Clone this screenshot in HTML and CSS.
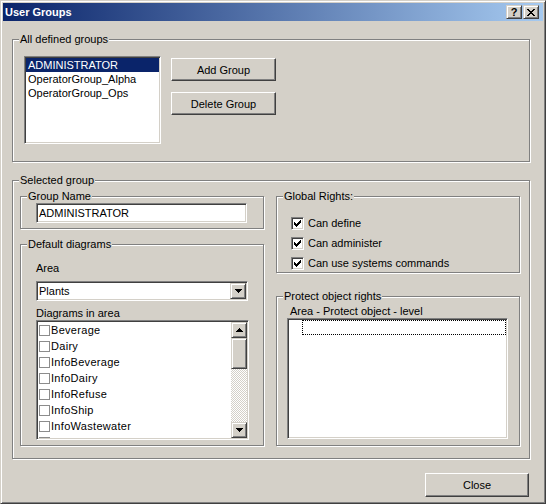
FILE: index.html
```html
<!DOCTYPE html>
<html lang="en">
<head>
  <meta charset="UTF-8">
  <title>User Groups</title>
  <link rel="stylesheet" href="styles.css">
</head>
<body>
  <div class="window">
    <div class="titlebar">
      <span class="title">User Groups</span>
      <div class="cap-btns">
        <div class="cap-btn help">?</div>
        <div class="cap-btn">
          <svg width="8" height="7" viewBox="0 0 8 7" shape-rendering="crispEdges"><path d="M0 0h2v1h-2z M6 0h2v1h-2z M1 1h2v1h-2z M5 1h2v1h-2z M2 2h4v1h-4z M3 3h2v1h-2z M2 4h4v1h-4z M1 5h2v1h-2z M5 5h2v1h-2z M0 6h2v1h-2z M6 6h2v1h-2z" fill="#000"/></svg>
        </div>
      </div>
    </div>

    <div class="dialog">
      <div class="group all-groups">
        <span class="caption">All defined groups</span>
        <div class="row">
          <div class="field groups-list">
            <div class="item selected-item">ADMINISTRATOR</div>
            <div class="item">OperatorGroup_Alpha</div>
            <div class="item">OperatorGroup_Ops</div>
          </div>
          <div class="btn-col">
            <div class="btn">Add Group</div>
            <div class="btn">Delete Group</div>
          </div>
        </div>
      </div>

      <div class="group selected">
        <span class="caption">Selected group</span>
        <div class="cols">
          <div class="col">
            <div class="group name-box">
              <span class="caption">Group Name</span>
              <div class="field text-field">ADMINISTRATOR</div>
            </div>

            <div class="group diagrams">
              <span class="caption">Default diagrams</span>
              <div class="diag-inner">
                <div class="label area-label">Area</div>
                <div class="field combo">
                  <span class="combo-text">Plants</span>
                  <div class="raised combo-btn">
                    <svg width="7" height="4" viewBox="0 0 7 4" shape-rendering="crispEdges"><path d="M0 0h7v1h-7z M1 1h5v1h-5z M2 2h3v1h-3z M3 3h1v1h-1z" fill="#000"/></svg>
                  </div>
                </div>
                <div class="label">Diagrams in area</div>
                <div class="field diag-list">
                  <div class="diag-items">
                    <div class="diag-item"><span class="flat-box"></span>Beverage</div>
                    <div class="diag-item"><span class="flat-box"></span>Dairy</div>
                    <div class="diag-item"><span class="flat-box"></span>InfoBeverage</div>
                    <div class="diag-item"><span class="flat-box"></span>InfoDairy</div>
                    <div class="diag-item"><span class="flat-box"></span>InfoRefuse</div>
                    <div class="diag-item"><span class="flat-box"></span>InfoShip</div>
                    <div class="diag-item"><span class="flat-box"></span>InfoWastewater</div>
                    <div class="diag-item"><span class="flat-box"></span>PlantEnergy</div>
                  </div>
                  <div class="scrollbar">
                    <div class="raised sb-btn">
                      <svg width="7" height="4" viewBox="0 0 7 4" shape-rendering="crispEdges"><path d="M3 0h1v1h-1z M2 1h3v1h-3z M1 2h5v1h-5z M0 3h7v1h-7z" fill="#000"/></svg>
                    </div>
                    <div class="raised sb-thumb"></div>
                    <div class="sb-track"></div>
                    <div class="raised sb-btn">
                      <svg width="7" height="4" viewBox="0 0 7 4" shape-rendering="crispEdges"><path d="M0 0h7v1h-7z M1 1h5v1h-5z M2 2h3v1h-3z M3 3h1v1h-1z" fill="#000"/></svg>
                    </div>
                  </div>
                </div>
              </div>
            </div>
          </div>

          <div class="col">
            <div class="group rights">
              <span class="caption">Global Rights:</span>
              <div class="checks">
                <div class="check-row"><span class="field check"><svg width="7" height="7" viewBox="0 0 7 7" shape-rendering="crispEdges"><path d="M6 0h1v1h-1z M5 1h2v1h-2z M0 2h1v1h-1z M4 2h3v1h-3z M0 3h2v1h-2z M3 3h3v1h-3z M0 4h5v1h-5z M1 5h3v1h-3z M2 6h1v1h-1z" fill="#000"/></svg></span>Can define</div>
                <div class="check-row"><span class="field check"><svg width="7" height="7" viewBox="0 0 7 7" shape-rendering="crispEdges"><path d="M6 0h1v1h-1z M5 1h2v1h-2z M0 2h1v1h-1z M4 2h3v1h-3z M0 3h2v1h-2z M3 3h3v1h-3z M0 4h5v1h-5z M1 5h3v1h-3z M2 6h1v1h-1z" fill="#000"/></svg></span>Can administer</div>
                <div class="check-row"><span class="field check"><svg width="7" height="7" viewBox="0 0 7 7" shape-rendering="crispEdges"><path d="M6 0h1v1h-1z M5 1h2v1h-2z M0 2h1v1h-1z M4 2h3v1h-3z M0 3h2v1h-2z M3 3h3v1h-3z M0 4h5v1h-5z M1 5h3v1h-3z M2 6h1v1h-1z" fill="#000"/></svg></span>Can use systems commands</div>
              </div>
            </div>

            <div class="group protect">
              <span class="caption">Protect object rights</span>
              <div class="label protect-head">Area - Protect object - level</div>
              <div class="field protect-list">
                <div class="focus-row"></div>
              </div>
            </div>
          </div>
        </div>
      </div>

      <div class="footer">
        <div class="btn close-btn">Close</div>
      </div>
    </div>
  </div>
</body>
</html>
```

FILE: styles.css
```css
body {
  margin: 0;
  font-family: "Liberation Sans", Arial, sans-serif;
  font-size: 11px;
  color: #000;
  background: #d4d0c8;
}
.window {
  width: 546px;
  height: 504px;
  box-sizing: border-box;
  border: 1px solid;
  border-color: #d4d0c8 #404040 #404040 #d4d0c8;
  box-shadow: inset 1px 1px #fff, inset -1px -1px #808080;
  padding: 2px;
  background: #d4d0c8;
  display: flex;
  flex-direction: column;
}
.titlebar {
  height: 18px;
  display: flex;
  align-items: center;
  justify-content: space-between;
  padding: 0 4px 0 2px;
  background: linear-gradient(to right, #0a246a, #a6caf0);
}
.title {
  color: #fff;
  font-weight: bold;
}
.cap-btns {
  display: flex;
  gap: 1px;
}
.cap-btn, .raised {
  box-sizing: border-box;
  background: #d4d0c8;
  border: 1px solid;
  border-color: #d4d0c8 #404040 #404040 #d4d0c8;
  box-shadow: inset 1px 1px #fff, inset -1px -1px #808080;
  display: flex;
  align-items: center;
  justify-content: center;
}
.cap-btn {
  width: 16px;
  height: 14px;
}
.cap-btn.help {
  font-weight: bold;
  font-size: 11px;
  line-height: 12px;
}
.dialog {
  flex: 1;
  padding: 18px 13px 0 9px;
  display: flex;
  flex-direction: column;
}
.group {
  box-sizing: border-box;
  border: 1px solid #808080;
  box-shadow: inset 1px 1px #fff, 1px 1px #fff;
  display: flex;
  flex-direction: column;
}
.caption {
  align-self: flex-start;
  margin: -7px 0 0 6px;
  padding: 0 1px;
  line-height: 13px;
  background: #d4d0c8;
}
.field {
  box-sizing: border-box;
  background: #fff;
  border: 1px solid;
  border-color: #808080 #fff #fff #808080;
  box-shadow: inset 1px 1px #404040, inset -1px -1px #d4d0c8;
  padding: 1px;
}
.btn {
  box-sizing: border-box;
  background: #d4d0c8;
  border: 1px solid;
  border-color: #fff #404040 #404040 #fff;
  box-shadow: inset -1px -1px #808080;
  display: flex;
  align-items: center;
  justify-content: center;
}

.all-groups {
  height: 123px;
}
.all-groups .row {
  display: flex;
  align-items: flex-start;
  gap: 10px;
  margin: 10px 0 0 11px;
}
.groups-list {
  width: 137px;
  height: 88px;
}
.item {
  line-height: 14px;
  padding-left: 2px;
}
.selected-item {
  background: #0a246a;
  color: #fff;
}
.btn-col {
  display: flex;
  flex-direction: column;
  gap: 11px;
  margin-top: 2px;
}
.btn-col .btn {
  width: 105px;
  height: 23px;
}

.selected {
  height: 279px;
  margin-top: 18px;
}
.cols {
  display: flex;
  gap: 12px;
  margin: 9px 0 0 7px;
}
.col {
  width: 244px;
  display: flex;
  flex-direction: column;
}
.name-box {
  height: 33px;
}
.text-field {
  width: 211px;
  height: 20px;
  margin-left: 15px;
  padding: 1px 1px 1px 2px;
  line-height: 16px;
}
.diagrams {
  height: 202px;
  margin-top: 15px;
}
.diag-inner {
  margin-left: 15px;
  display: flex;
  flex-direction: column;
}
.label {
  line-height: 13px;
}
.area-label {
  margin-top: 11px;
}
.combo {
  width: 212px;
  height: 20px;
  margin: 6px 0 6px;
  display: flex;
  align-items: center;
  justify-content: space-between;
}
.combo-text {
  padding-left: 1px;
}
.combo-btn {
  width: 16px;
  height: 16px;
}
.diag-list {
  width: 213px;
  height: 120px;
  display: flex;
}
.diag-items {
  flex: 1;
  overflow: hidden;
}
.diag-item {
  height: 16px;
  display: flex;
  align-items: center;
  gap: 1px;
  letter-spacing: 0.3px;
}
.flat-box {
  width: 11px;
  height: 11px;
  box-sizing: border-box;
  border: 1px solid #8c8c8c;
  background: #fff;
  margin-left: 1px;
}
.scrollbar {
  width: 16px;
  display: flex;
  flex-direction: column;
}
.sb-btn {
  height: 16px;
}
.sb-thumb {
  height: 31px;
}
.sb-track {
  flex: 1;
  background: conic-gradient(#fff 25%, #d4d0c8 0 50%, #fff 0 75%, #d4d0c8 0) 0 0 / 2px 2px;
}

.rights {
  height: 77px;
}
.checks {
  margin: 10px 0 0 14px;
}
.check-row {
  height: 20px;
  display: flex;
  align-items: center;
  gap: 4px;
}
.check {
  width: 13px;
  height: 13px;
  display: flex;
  align-items: center;
  justify-content: center;
  padding: 0;
}
.protect {
  height: 150px;
  margin-top: 23px;
}
.protect-head {
  margin: 2px 0 0 13px;
}
.protect-list {
  width: 221px;
  height: 121px;
  margin-left: 10px;
}
.focus-row {
  height: 15px;
  margin-left: 13px;
  box-sizing: border-box;
  border: 1px dotted #000;
}

.footer {
  display: flex;
  justify-content: flex-end;
  margin-top: 14px;
}
.close-btn {
  width: 104px;
  height: 24px;
  margin-right: 1px;
}
```
